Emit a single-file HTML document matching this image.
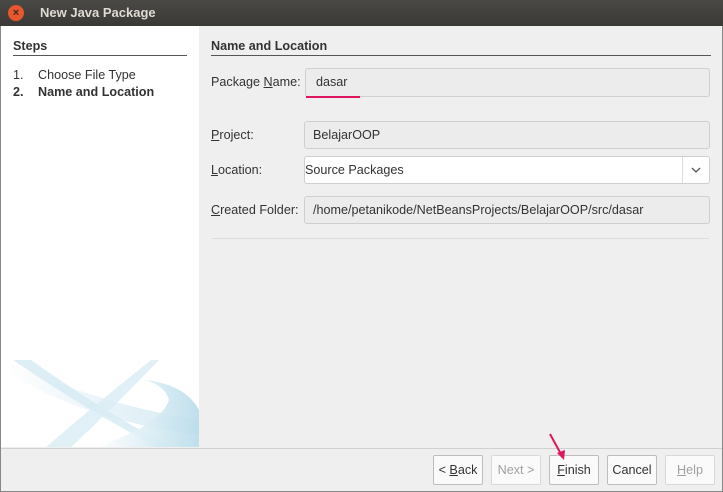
<!DOCTYPE html>
<html><head><style>
body{margin:0;width:723px;height:492px;overflow:hidden;font-family:"Liberation Sans",sans-serif;font-size:12.6px;color:#333;background:#efefef;position:relative}
.a{position:absolute}
.title{left:0;top:0;width:723px;height:26px;background:linear-gradient(#4a4945,#3a3935);color:#dfdbd2;font-weight:bold;font-size:13px}
.fld{border:1px solid #cfcfcf;border-radius:3px;background:#ececec;box-sizing:border-box;padding-left:8px;line-height:26px}
.btn{top:455px;height:30px;width:50px;border:1px solid #bdbdbd;border-radius:2px;background:#fafafa;box-sizing:border-box;text-align:center;line-height:28px;font-size:12.6px}
u{text-decoration:underline}
</style></head><body>
<div class="a title"><div class="a" style="left:8px;top:5px;width:16px;height:16px;border-radius:50%;background:#e8572d;color:#3a2a20;font-size:11px;line-height:16px;text-align:center">×</div><div class="a" style="left:40px;top:5px">New Java Package</div></div>
<div class="a" style="left:0;top:26px;width:1px;height:466px;background:#888"></div>
<div class="a" style="left:722px;top:26px;width:1px;height:466px;background:#888"></div>
<div class="a" style="left:0;top:491px;width:723px;height:1px;background:#888"></div>
<div class="a" style="left:1px;top:26px;width:198px;height:421px;background:#fff"></div>
<svg class="a" style="left:1px;top:360px" width="198" height="87">
<defs><linearGradient id="g" x1="0" x2="1"><stop offset="0" stop-color="#fff"/><stop offset="1" stop-color="#b9dcea"/></linearGradient></defs>
<path d="M0 8 Q80 60 198 75 L198 60 Q100 45 0 0Z" fill="url(#g)" opacity=".6"/>
<path d="M12 0 L30 0 Q100 50 170 87 L155 87 Q70 40 12 0Z" fill="#d5eaf2" opacity=".8"/>
<path d="M150 0 L158 0 Q110 50 70 87 L45 87 Q100 40 150 0Z" fill="#d9ecf4" opacity=".8"/>
<path d="M145 20 Q185 25 198 50 L198 87 L95 87 Q160 65 168 40 Q165 27 145 20Z" fill="url(#g)" opacity=".9"/>
</svg>
<div class="a" style="left:13px;top:39px;font-weight:bold">Steps</div>
<div class="a" style="left:13px;top:55px;width:174px;height:1px;background:#555"></div>
<div class="a" style="left:13px;top:68px">1.</div><div class="a" style="left:38px;top:68px">Choose File Type</div>
<div class="a" style="left:13px;top:85px;font-weight:bold">2.</div><div class="a" style="left:38px;top:85px;font-weight:bold">Name and Location</div>
<div class="a" style="left:211px;top:39px;font-weight:bold">Name and Location</div>
<div class="a" style="left:211px;top:55px;width:500px;height:1px;background:#555"></div>
<div class="a" style="left:211px;top:75px">Package <u>N</u>ame:</div>
<div class="a fld" style="left:305px;top:68px;width:405px;height:29px;line-height:27px;padding-left:10px">dasar</div>
<div class="a" style="left:306px;top:96px;width:54px;height:2px;background:#e0155f"></div>
<div class="a" style="left:211px;top:128px"><u>P</u>roject:</div>
<div class="a fld" style="left:304px;top:121px;width:406px;height:28px">BelajarOOP</div>
<div class="a" style="left:211px;top:163px"><u>L</u>ocation:</div>
<div class="a" style="left:304px;top:156px;width:406px;height:28px;border:1px solid #cfcfcf;border-radius:3px;background:#fff;box-sizing:border-box;line-height:26px">Source Packages<div class="a" style="right:0;top:0;width:26px;height:26px;border-left:1px solid #ddd"><svg width="26" height="26"><path d="M9 11 L13 15 L17 11" stroke="#555" stroke-width="1.3" fill="none"/></svg></div></div>
<div class="a" style="left:211px;top:203px"><u>C</u>reated Folder:</div>
<div class="a fld" style="left:304px;top:196px;width:406px;height:28px">/home/petanikode/NetBeansProjects/BelajarOOP/src/dasar</div>
<div class="a" style="left:212px;top:238px;width:497px;height:1px;background:#ddd"></div>
<div class="a" style="left:1px;top:448px;width:721px;height:1px;background:#d0d0d0"></div>
<div class="a btn" style="left:433px">&lt; <u>B</u>ack</div>
<div class="a btn" style="left:491px;color:#a0a0a0;border-color:#d8d8d8">Next &gt;</div>
<div class="a btn" style="left:549px"><u>F</u>inish</div>
<div class="a btn" style="left:607px">Cancel</div>
<div class="a btn" style="left:665px;color:#a0a0a0;border-color:#d8d8d8"><u>H</u>elp</div>
<svg class="a" style="left:548px;top:432px" width="20" height="30"><path d="M2 2 L14 24" stroke="#e0155f" stroke-width="2"/><path d="M9 21 L16 28 L17 18Z" fill="#e0155f"/></svg>
</body></html>
